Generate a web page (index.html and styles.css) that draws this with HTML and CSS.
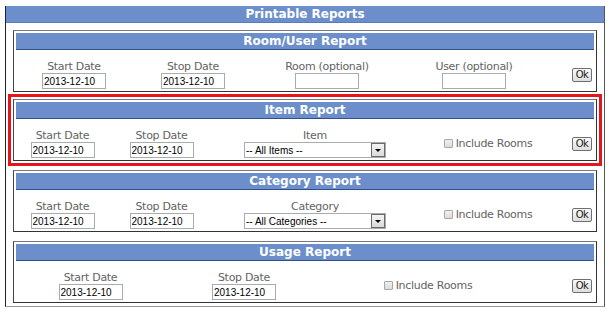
FILE: index.html
```html
<!DOCTYPE html>
<html lang="en">
<head>
    <meta charset="UTF-8">
    <title>Printable Reports</title>
    <link rel="stylesheet" href="styles.css">
</head>
<body>
    <div class="reports">
        <div class="reports-title">Printable Reports</div>

        <div class="report">
            <div class="report-head">Room/User Report</div>
            <div class="report-row row-room">
                <div class="field"><label>Start Date</label><input type="text" value="2013-12-10"></div>
                <div class="field"><label>Stop Date</label><input type="text" value="2013-12-10"></div>
                <div class="field"><label>Room (optional)</label><input type="text"></div>
                <div class="field"><label>User (optional)</label><input type="text"></div>
                <div class="action"><button>Ok</button></div>
            </div>
        </div>

        <div class="report report-selected">
            <div class="report-head">Item Report</div>
            <div class="report-row row-item">
                <div class="field"><label>Start Date</label><input type="text" value="2013-12-10"></div>
                <div class="field"><label>Stop Date</label><input type="text" value="2013-12-10"></div>
                <div class="field">
                    <label>Item</label>
                    <div class="select">
                        <select><option>-- All Items --</option></select>
                        <span class="select-arrow"></span>
                    </div>
                </div>
                <div class="check"><span class="checkbox"></span>Include Rooms</div>
                <div class="action"><button>Ok</button></div>
            </div>
        </div>

        <div class="report">
            <div class="report-head">Category Report</div>
            <div class="report-row row-item">
                <div class="field"><label>Start Date</label><input type="text" value="2013-12-10"></div>
                <div class="field"><label>Stop Date</label><input type="text" value="2013-12-10"></div>
                <div class="field">
                    <label>Category</label>
                    <div class="select">
                        <select><option>-- All Categories --</option></select>
                        <span class="select-arrow"></span>
                    </div>
                </div>
                <div class="check"><span class="checkbox"></span>Include Rooms</div>
                <div class="action"><button>Ok</button></div>
            </div>
        </div>

        <div class="report">
            <div class="report-head">Usage Report</div>
            <div class="report-row row-usage">
                <div class="field"><label>Start Date</label><input type="text" value="2013-12-10"></div>
                <div class="field"><label>Stop Date</label><input type="text" value="2013-12-10"></div>
                <div class="check"><span class="checkbox"></span>Include Rooms</div>
                <div class="action"><button>Ok</button></div>
            </div>
        </div>
    </div>
</body>
</html>
```

FILE: styles.css
```css
body {
    margin: 0;
    font-family: "DejaVu Sans", Verdana, sans-serif;
    background-color: #fff;
}

.reports {
    width: 598px;
    margin: 6px 0 0 5px;
    padding-bottom: 3px;
    border-left: 1px solid #222;
    border-right: 1px solid #555;
    border-bottom: 1px solid #999;
}

.reports-title {
    height: 16px;
    line-height: 16px;
    margin-bottom: 7px;
    background-color: #6c8fcb;
    border-bottom: 1px solid #5a7dba;
    color: #fff;
    font-size: 12px;
    font-weight: bold;
    text-align: center;
}

.report {
    height: 62px;
    box-sizing: border-box;
    margin: 0 7px;
    padding: 2px;
    border: 1px solid;
    border-color: #777 #333 #333 #444;
}

.report + .report {
    margin-top: 9px;
}

.report:nth-child(3) {
    margin-top: 7px;
}

.report-selected {
    outline: 3px solid #e8141c;
    outline-offset: 2px;
}

.report-head {
    height: 16px;
    line-height: 16px;
    background-color: #6c8fcb;
    border-bottom: 1px solid #2f5088;
    color: #fff;
    font-size: 12px;
    font-weight: bold;
    text-align: center;
}

.report-row {
    display: grid;
    height: 39px;
    box-sizing: border-box;
    padding-top: 10px;
}

.row-room {
    grid-template-columns: 116px 122px 146px 148px 46px;
}

.row-item {
    grid-template-columns: 93px 105px 202px 144px 34px;
}

.row-usage {
    grid-template-columns: 149px 158px 210px 61px;
}

.field {
    display: flex;
    flex-direction: column;
    align-items: center;
}

label {
    font-size: 11px;
    line-height: 13px;
    letter-spacing: -0.3px;
    color: #636363;
}

input[type="text"] {
    display: block;
    width: 64px;
    height: 16px;
    box-sizing: border-box;
    margin: 0;
    padding: 0 1px;
    border: 1px solid #a5acb2;
    font-family: "Liberation Sans", Arial, sans-serif;
    font-size: 10px;
    color: #000;
}

.select {
    position: relative;
    width: 142px;
    height: 16px;
}

select {
    display: block;
    width: 100%;
    height: 16px;
    box-sizing: border-box;
    margin: 0;
    padding: 0 0 0 1px;
    border: 1px solid #a5acb2;
    border-radius: 0;
    background-color: #fff;
    appearance: none;
    -webkit-appearance: none;
    font-family: "Liberation Sans", Arial, sans-serif;
    font-size: 10px;
    color: #000;
}

.select-arrow {
    position: absolute;
    top: 1px;
    right: 1px;
    width: 14px;
    height: 14px;
    box-sizing: border-box;
    border: 1px solid #6a6a6a;
    background: linear-gradient(#f4f4f4, #dadada);
}

.select-arrow::after {
    content: "";
    position: absolute;
    top: 5px;
    left: 3px;
    border-left: 3px solid transparent;
    border-right: 3px solid transparent;
    border-top: 3px solid #000;
}

.check {
    display: flex;
    align-items: center;
    justify-content: center;
    gap: 3px;
    font-size: 11px;
    letter-spacing: -0.3px;
    color: #636363;
}

.checkbox {
    width: 9px;
    height: 9px;
    box-sizing: border-box;
    border: 1px solid #a8a8a8;
    border-radius: 1px;
    background: linear-gradient(#f0f0f0, #dcdcdc);
}

.action {
    display: flex;
    align-items: center;
    justify-content: flex-end;
    padding-right: 2px;
}

button {
    width: 20px;
    height: 14px;
    box-sizing: border-box;
    margin: 0;
    padding: 0;
    border: 1px solid #6f6f6f;
    border-radius: 2px;
    background: linear-gradient(#fafafa, #dedede);
    font-family: "DejaVu Sans", Verdana, sans-serif;
    font-size: 10px;
    line-height: 12px;
    letter-spacing: -0.5px;
    color: #1a1a1a;
}
```
